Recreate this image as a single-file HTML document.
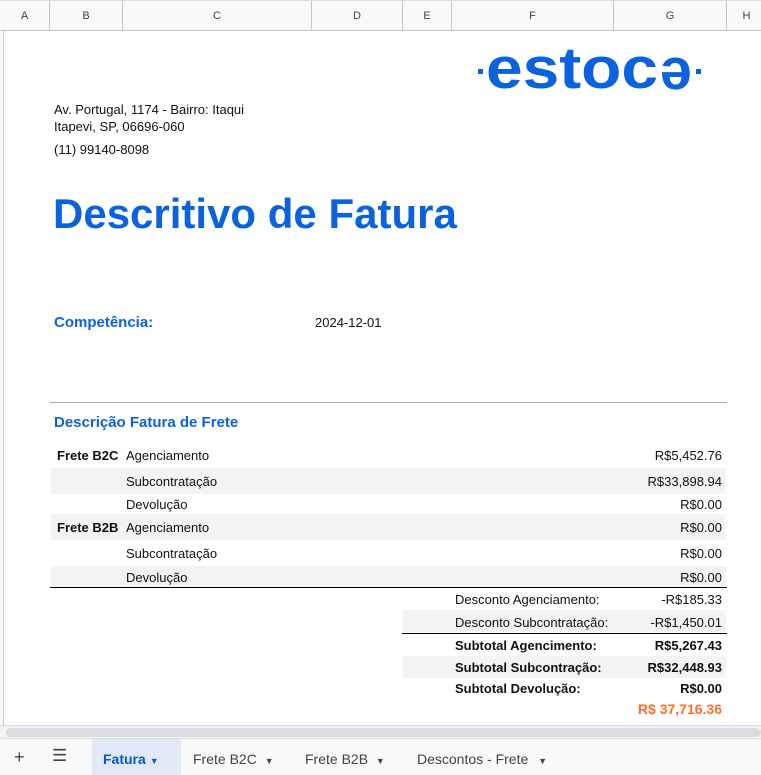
<!DOCTYPE html>
<html><head><meta charset="utf-8"><style>
*{margin:0;padding:0;box-sizing:border-box}
body{width:761px;height:775px;overflow:hidden;background:#fff;font-family:"Liberation Sans",sans-serif;position:relative;color:#222}
.a{position:absolute;white-space:nowrap}
.hdr{position:absolute;top:0;left:0;width:761px;height:31px;background:#f8f9fa;border-bottom:1px solid #c7c7c7;border-top:1px solid #dadce0}
.col{position:absolute;top:0;height:30px;border-right:1px solid #c7c7c7;font-size:11px;color:#444;text-align:center;line-height:30px}
.gut{position:absolute;left:0;top:31px;width:4px;height:696px;border-right:1px solid #c7c7c7;background:#f8f9fa}
.t{font-size:13px;color:#111}
.b{font-weight:bold}
.r{text-align:right}
.gray{position:absolute;background:#f3f3f3}
</style></head><body>
<div class="hdr">
<div class="col" style="left:0;width:50px">A</div>
<div class="col" style="left:50px;width:73px">B</div>
<div class="col" style="left:123px;width:189px">C</div>
<div class="col" style="left:312px;width:91px">D</div>
<div class="col" style="left:403px;width:49px">E</div>
<div class="col" style="left:452px;width:162px">F</div>
<div class="col" style="left:614px;width:113px">G</div>
<div class="col" style="left:727px;width:40px">H</div>
</div>
<div class="gut"></div>

<svg class="a" style="left:0;top:0" width="761" height="110">
<g fill="#0a63dc" font-family="Liberation Sans" font-weight="bold" font-size="58">
<rect x="478" y="69" width="5" height="5"/>
<text x="486" y="88" textLength="172" lengthAdjust="spacingAndGlyphs">estoc</text>
<text transform="translate(676,73) rotate(180)" x="0" y="15" text-anchor="middle" textLength="32" lengthAdjust="spacingAndGlyphs">e</text>
<rect x="696" y="69" width="5" height="5"/>
</g>
</svg>

<div class="a t" style="left:54px;top:102px">Av. Portugal, 1174 - Bairro: Itaqui</div>
<div class="a t" style="left:54px;top:119px">Itapevi, SP, 06696-060</div>
<div class="a t" style="left:54px;top:142px">(11) 99140-8098</div>

<div class="a b" style="left:53px;top:190px;font-size:42px;color:#0a63dc">Descritivo de Fatura</div>

<div class="a b" style="left:54px;top:314px;font-size:15px;color:#0a63dc">Competência:</div>
<div class="a t" style="left:315px;top:315px">2024-12-01</div>

<div class="a" style="left:50px;top:402px;width:677px;height:1px;background:#aaa"></div>
<div class="a b" style="left:54px;top:414px;font-size:15px;color:#0a63dc">Descrição Fatura de Frete</div>

<div class="gray" style="left:51px;top:468px;width:675px;height:26px"></div>
<div class="gray" style="left:51px;top:514px;width:675px;height:26px"></div>
<div class="gray" style="left:51px;top:566px;width:675px;height:21px"></div>
<div class="a" style="left:50px;top:587px;width:677px;height:1px;background:#000"></div>

<div class="a t b" style="left:57px;top:448px">Frete B2C</div>
<div class="a t" style="left:126px;top:448px">Agenciamento</div>
<div class="a t r" style="right:39px;top:448px">R$5,452.76</div>
<div class="a t" style="left:126px;top:474px">Subcontratação</div>
<div class="a t r" style="right:39px;top:474px">R$33,898.94</div>
<div class="a t" style="left:126px;top:497px">Devolução</div>
<div class="a t r" style="right:39px;top:497px">R$0.00</div>
<div class="a t b" style="left:57px;top:520px">Frete B2B</div>
<div class="a t" style="left:126px;top:520px">Agenciamento</div>
<div class="a t r" style="right:39px;top:520px">R$0.00</div>
<div class="a t" style="left:126px;top:546px">Subcontratação</div>
<div class="a t r" style="right:39px;top:546px">R$0.00</div>
<div class="a t" style="left:126px;top:570px">Devolução</div>
<div class="a t r" style="right:39px;top:570px">R$0.00</div>

<div class="gray" style="left:403px;top:610px;width:323px;height:22px"></div>
<div class="a" style="left:402px;top:633px;width:325px;height:1px;background:#000"></div>
<div class="gray" style="left:403px;top:656px;width:323px;height:22px"></div>

<div class="a t" style="left:455px;top:592px">Desconto Agenciamento:</div>
<div class="a t r" style="right:39px;top:592px">-R$185.33</div>
<div class="a t" style="left:455px;top:615px">Desconto Subcontratação:</div>
<div class="a t r" style="right:39px;top:615px">-R$1,450.01</div>
<div class="a t b" style="left:455px;top:638px">Subtotal Agencimento:</div>
<div class="a t b r" style="right:39px;top:638px">R$5,267.43</div>
<div class="a t b" style="left:455px;top:660px">Subtotal Subcontração:</div>
<div class="a t b r" style="right:39px;top:660px">R$32,448.93</div>
<div class="a t b" style="left:455px;top:681px">Subtotal Devolução:</div>
<div class="a t b r" style="right:39px;top:681px">R$0.00</div>
<div class="a b r" style="right:39px;top:701px;font-size:14px;color:#ff6d2a">R$ 37,716.36</div>

<div class="a" style="left:0;top:725px;width:761px;height:13px;background:#f1f3f4;border-top:1px solid #dadce0"></div>
<div class="a" style="left:6px;top:728px;width:755px;height:9px;background:#dadce0;border-radius:5px"></div>
<div class="a" style="left:0;top:738px;width:761px;height:37px;background:#f8f9fa;border-top:1px solid #e0e0e0"></div>
<div class="a" style="left:14px;top:747px;font-size:18px;color:#444">+</div>
<div class="a" style="left:52px;top:746px;font-size:17px;color:#444">☰</div>
<div class="a" style="left:92px;top:739px;width:89px;height:36px;background:#e1e9f7"></div>
<div class="a b" style="left:103px;top:751px;font-size:14px;color:#0b57d0">Fatura <span style="font-size:9px">▼</span></div>
<div class="a" style="left:193px;top:751px;font-size:14px;color:#444">Frete B2C <span style="font-size:9px;margin-left:4px">▼</span></div>
<div class="a" style="left:305px;top:751px;font-size:14px;color:#444">Frete B2B <span style="font-size:9px;margin-left:4px">▼</span></div>
<div class="a" style="left:417px;top:751px;font-size:14px;color:#444">Descontos - Frete <span style="font-size:9px;margin-left:6px">▼</span></div>
</body></html>
